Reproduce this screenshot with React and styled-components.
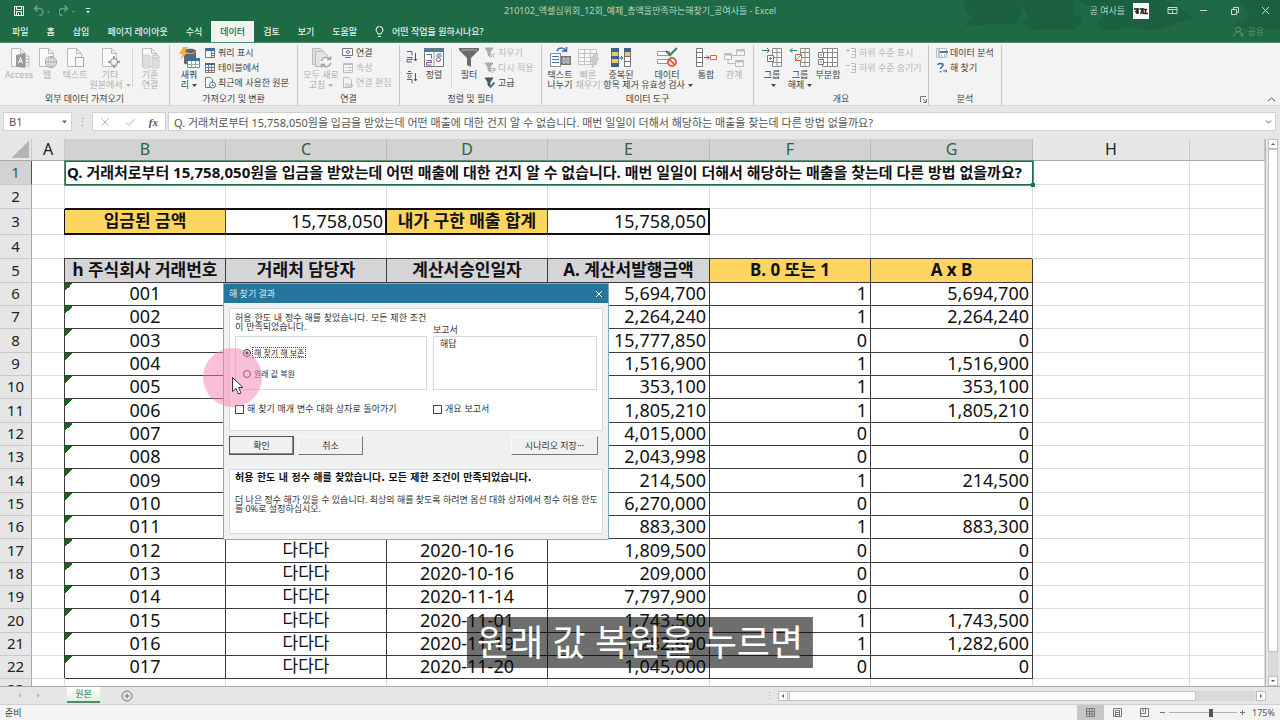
import React, {useState} from "react"
import styled, {createGlobalStyle, css} from "styled-components"


const GlobalStyle = createGlobalStyle`
    * {
        box-sizing: border-box;
    }

    body {
        margin: 0;
        font-family: "Noto Sans", "Noto Sans CJK KR", sans-serif;
        font-size: 9px;
        color: #333;
    }

    button, input, select {
        font: inherit;
        color: inherit;
        margin: 0;
        padding: 0;
        border: 0;
        border-radius: 0;
        background: none;
    }
`

const Window = styled.div`
    display: flex;
    flex-direction: column;
    height: 100vh;
    overflow: hidden;
    background: #e6e6e6;
`


/* ---------- icons ---------- */

const Svg = ({size = 22, children, ...rest}) => (
    <svg width={size} height={size} viewBox={`0 0 ${size} ${size}`} fill="none" stroke="#777" aria-hidden="true" {...rest}>
        {children}
    </svg>
)

const page = "M3.5 1.5h9l5 5v13h-14zM12.5 1.5v5h5"

const icons = {
    access: (
        <Svg stroke="#bbb">
            <path d={page} fill="#fafafa"/>
            <path d="M8 8l9-1.500v14.500l-9-1.500z" fill="#999" stroke="none"/>
            <path d="M10.500 16.500l2-6 2 6M11 14.500h3" stroke="#fff"/>
            <path d="M17 9h4v10h-4M17 12.500h4M17 15.500h4"/>
        </Svg>
    ),
    web: (
        <Svg stroke="#bbb">
            <path d={page} fill="#fafafa"/>
            <circle cx="15" cy="15" r="5.500" fill="#f3f3f3" stroke="#999"/>
            <path d="M9.500 15h11M15 9.500v11M15 9.500c-4 3-4 8 0 11M15 9.500c4 3 4 8 0 11" stroke="#aaa"/>
        </Svg>
    ),
    text: (
        <Svg stroke="#bbb">
            <path d={page} fill="#fafafa"/>
            <rect x="11.500" y="10.500" width="8" height="9" fill="#fafafa" stroke="#aaa"/>
        </Svg>
    ),
    other: (
        <Svg stroke="#bbb">
            <path d={page} fill="#fafafa"/>
            <circle cx="15" cy="15" r="3.500" fill="#f3f3f3" stroke="#888"/>
            <path d="M15 9v3M15 18v3M9 15h3M18 15h3" stroke="#888" strokeWidth="1.500"/>
        </Svg>
    ),
    existing: (
        <Svg stroke="#bbb">
            <path d={page} fill="#fafafa"/>
            <path d="M4 8h7v13h-7zM13 9h7v12h-7z" fill="#ddd" stroke="#d0d0d0"/>
            <ellipse cx="16.500" cy="9.500" rx="3.500" ry="1.500" fill="#eee"/>
        </Svg>
    ),
    newQuery: (
        <Svg>
            <path d="M6 4c0-3 12-3 12 0v12c0 2-12 2-12 0z" fill="#666" stroke="none"/>
            <path d="M6.500 5c2 2 9 2 11 0" stroke="#bbb"/>
            <path d="M5 0h5L7 5h3L2 13l2.500-6H1z" fill="#f0b04c" stroke="none"/>
            <path d="M9.500 11.500h12v9h-12z" fill="#fff" stroke="#7c8794"/>
            <path d="M9 11h13v3H9z" fill="#2f76b5" stroke="none"/>
            <path d="M9.500 17.500h12M13.500 14v7M17.500 14v7" stroke="#9aa"/>
        </Svg>
    ),
    refreshAll: (
        <Svg stroke="#bbb">
            <path d="M2.500 1.500h8l3 3v13h-11z" fill="#ddd"/>
            <path d="M5.500 4.500h8l4 4v11h-12z" fill="#e3e3e3"/>
            <circle cx="16" cy="15" r="6" fill="#f3f3f3" stroke="none"/>
            <path d="M11.500 14a4.500 4.500 0 0 1 8-2M20.500 9.500v3h-3.500M20.500 16a4.500 4.500 0 0 1-8 2M11.500 20.500v-3h3.500" stroke="#a5a5a5" strokeWidth="1.500"/>
        </Svg>
    ),
    sort: (
        <Svg>
            <path d="M1.500 2.500h19v17h-19z" fill="#fff"/>
            <path d="M1 1h20v4H1z" fill="#5b7894" stroke="none"/>
            <path d="M11 5v15" stroke="#999"/>
            <path d="M3.500 7.500h5v4M14 7h4M13 9h6" stroke="#3b6cb0"/>
            <circle cx="15.500" cy="12.500" r="2" stroke="#7d4aa5"/>
            <path d="M3.500 13.500h5v2h-5v2.500h5" stroke="#7d4aa5"/>
        </Svg>
    ),
    filter: (
        <Svg>
            <path d="M1 1h20v2l-8 8v9l-4-2v-7L1 3z" fill="#6b6b6b" stroke="none"/>
            <path d="M3 3h16" stroke="#aaa"/>
        </Svg>
    ),
    split: (
        <Svg>
            <path d="M1.500 6.500h10v13h-10z" fill="#fff" stroke="#8a9199"/>
            <path d="M3 9.500h7M3 12.500h7M3 15.500h7" stroke="#4379b5"/>
            <path d="M8 4c2-4 8-4 9 1M13 4h4.500V0" stroke="#2f6db5" strokeWidth="1.500"/>
            <path d="M12 9h10v9H12z" fill="#777" stroke="none"/>
            <path d="M14 11v5h2v-5zM18 11v5h2v-5z" stroke="#ddd"/>
        </Svg>
    ),
    flash: (
        <Svg stroke="#c4c4c4">
            <path d="M1.500 2.500h18v15h-18zM1.500 6.500h18M1.500 10.500h18M1.500 14.500h18M7.500 2.500v15M13.500 2.500v15" fill="#f7f7f7"/>
            <path d="M17 7h4l-2 4h3l-7 10 1-6h-3z" fill="#ccc"/>
        </Svg>
    ),
    duplicates: (
        <Svg>
            <path d="M1.500 1.500h7v18h-7zM14.500 1.500h6v18h-6z" fill="#fff"/>
            <path d="M1 1h8v4H1zM1 9h8v3H1zM1 16h8v4H1zM14 1h7v4h-7z" fill="#3f6285" stroke="none"/>
            <path d="M2 5h6v4H2zM2 12h6v4H2zM15 5h5v4h-5z" fill="#e9c577" stroke="none"/>
            <path d="M14.500 9.500h6M14.500 14.500h6"/>
            <path d="M9 11h4M11 9l2 2-2 2" stroke="#2f6db5"/>
        </Svg>
    ),
    validation: (
        <Svg>
            <path d="M1.500 4.500h12v4h-12zM1.500 12.500h11v4h-11z" fill="#fff" stroke="#999"/>
            <path d="M10 4l4 4 7-7" stroke="#388068" strokeWidth="2"/>
            <circle cx="16" cy="15" r="4" fill="#fff" stroke="#dc6144" strokeWidth="2"/>
            <path d="M13.500 12.500l5 5" stroke="#dc6144" strokeWidth="2"/>
        </Svg>
    ),
    consolidate: (
        <Svg>
            <path d="M1.500 1.500h6v18h-6zM1.500 5.500h6M1.500 10.500h6M1.500 15.500h6" fill="#fff"/>
            <path d="M9 10.500h5M12 8.500l2 2-2 2" stroke="#2f6db5"/>
            <path d="M15.500 8.500h6v4h-6z" stroke="#dc6144" fill="#fff"/>
        </Svg>
    ),
    relation: (
        <Svg stroke="#bbb">
            <path d="M1.500 6.500h7v6h-7zM13.500 2.500h8v6h-8zM12.500 13.500h8v6h-8zM8.500 8.500h5M5 12.500v4h7.500" fill="#f8f8f8"/>
            <path d="M2 7.500h6M14 3.500h7M13 14.500h7" strokeWidth="2"/>
        </Svg>
    ),
    group: (
        <Svg>
            <path d="M1 3.500h7M6 1l2.500 2.500L6 6" stroke="#388068"/>
            <path d="M11.500 1.500h9v18h-9zM16 1.500v18M11.500 5.500h9M11.500 10.500h9M11.500 15.500h9" fill="#fff" stroke="#8c8c8c"/>
            <path d="M6.500 8.500h6v6h-6zM8 11.500h3M9.500 10v3" fill="#fff"/>
        </Svg>
    ),
    ungroup: (
        <Svg>
            <path d="M1 3.500h7M3.500 1L1 3.500 3.500 6" stroke="#388068"/>
            <path d="M11.500 1.500h9v18h-9zM16 1.500v18M11.500 5.500h9M11.500 10.500h9M11.500 15.500h9" fill="#fff" stroke="#8c8c8c"/>
            <path d="M6.500 7.500h6v6h-6zM6.500 13.500l6-6" fill="#fff" stroke="#dc6144"/>
        </Svg>
    ),
    subtotal: (
        <Svg>
            <path d="M5.500 1.500h15v18h-15zM10.500 1.500v18M15.500 1.500v18M5.500 5.500h15M5.500 10.500h15M5.500 15.500h15" fill="#fff" stroke="#8c8c8c"/>
            <path d="M1.500 5.500h5v5h-5zM1.500 12.500h5v5h-5zM3 8h2M3 15h2" fill="#fff"/>
        </Svg>
    ),
    showQueries: (
        <Svg size={12}>
            <path d="M1.500 1.500h9v9h-9zM7.500 4v6" fill="#fff"/>
            <path d="M1 1h10v3H1z" fill="#3f6f9c" stroke="none"/>
            <path d="M8 6.500h2M8 8.500h2" stroke="#4379b5"/>
        </Svg>
    ),
    fromTable: (
        <Svg size={12}>
            <path d="M1.500 1.500h9v9h-9zM4.500 3v8M7.500 3v8M1 5.500h10M1 8.500h10" fill="#fff"/>
            <path d="M1 1h10v2H1z" fill="#3f6f9c" stroke="none"/>
        </Svg>
    ),
    recent: (
        <Svg size={12}>
            <path d="M1.500 .5h5l2 2v8h-7z" fill="#fff"/>
            <circle cx="8.500" cy="8" r="3" fill="#fff" stroke="#4379b5"/>
            <path d="M8.500 6.500v2h1.500" stroke="#4379b5"/>
        </Svg>
    ),
    connection: (
        <Svg size={12}>
            <path d="M.5 1.500h10v7h-10zM3 10.500h6" fill="#fff"/>
            <circle cx="6" cy="5" r="1.500" stroke="#4379b5"/>
            <path d="M3.500 5h1M7.500 5h1" stroke="#4379b5"/>
        </Svg>
    ),
    properties: (
        <Svg size={12} stroke="#bbb">
            <path d="M1.500 1.500h9v9h-9zM5.500 5.500h4M5.500 8.500h4M3 5.500h1M3 8.500h1"/>
            <path d="M1.500 2.500h9"/>
        </Svg>
    ),
    editLinks: (
        <Svg size={12} stroke="#bbb">
            <path d="M1.500 .5h5l3 3v7h-8z"/>
            <circle cx="5" cy="8.500" r="1.500"/>
            <circle cx="9" cy="8.500" r="1.500"/>
        </Svg>
    ),
    clear: (
        <Svg size={12} stroke="#aaa">
            <path d="M1 1h8L6 5v5L4 8V5z" fill="#aaa"/>
            <path d="M6.500 6.500l4 4M10.500 6.500l-4 4"/>
        </Svg>
    ),
    reapply: (
        <Svg size={12} stroke="#aaa">
            <path d="M1 1h8L6 5v5L4 8V5z" fill="#aaa"/>
            <path d="M10.500 8a2 2 0 1 0-1 2M11 6v2.500H8.500"/>
        </Svg>
    ),
    advanced: (
        <Svg size={12} stroke="#555">
            <path d="M1 1h8L6 5v5L4 8V5z" fill="#555"/>
            <path d="M6 10.500l4.500-5" stroke="#3b7abf" strokeWidth="2"/>
        </Svg>
    ),
    showDetail: (
        <Svg size={12} stroke="#bbb">
            <path d="M1 3.500h4M3 1.500v4M6 1.500h4.500v9H6M7 4.500h3M7 7.500h3"/>
        </Svg>
    ),
    hideDetail: (
        <Svg size={12} stroke="#bbb">
            <path d="M1 3.500h4M6 1.500h4.500v9H6M7 4.500h3M7 7.500h3"/>
        </Svg>
    ),
    analysis: (
        <Svg size={12} stroke="#bbb">
            <path d="M.5 1.500h2v9h-2zM3.500 1.500h7v9h-7zM5.500 7v3M8.500 7v3" fill="#fff"/>
            <path d="M4 5h8" stroke="#3b7abf" strokeWidth="2"/>
        </Svg>
    ),
    solver: (
        <Svg size={12} stroke="#33679f">
            <path d="M2 3c0-2 5-2 5 0 0 1.500-2.500 2-2.500 4M4.500 9v1.500" strokeWidth="1.500"/>
            <path d="M7 9h4M9.500 7.500L11 9l-1.500 1.500"/>
        </Svg>
    ),
    sortAsc: (
        <Svg size={14}>
            <path d="M2 1.500h5v4" stroke="#3b6cb0"/>
            <path d="M2 7.500h5v2H2v2.500h5" stroke="#7d4aa5"/>
            <path d="M10.500 3v8M9 9l1.500 2L12 9" stroke="#555"/>
        </Svg>
    ),
    sortDesc: (
        <Svg size={14}>
            <path d="M3 1.500h3M1.500 3.500h6" stroke="#7d4aa5"/>
            <circle cx="4.500" cy="6.500" r="1.500" stroke="#7d4aa5"/>
            <path d="M2 9.500h5v4" stroke="#3b6cb0"/>
            <path d="M10.500 3v8M9 9l1.500 2L12 9" stroke="#555"/>
        </Svg>
    )
}


/* ---------- title bar ---------- */

const Header = styled.header`
    position: relative;
    flex: none;
    background: #1d6a45;
    color: #e4f0e9;
    border-bottom: 1px solid #4d8c6c;
`

const Clouds = styled.svg`
    position: absolute;
    top: 0;
    right: 0;
    width: 330px;
    height: 42px;
`

const TitleBar = styled.div`
    position: relative;
    display: grid;
    grid-template-columns: 1fr auto 1fr;
    align-items: center;
    height: 21px;
`

const QuickAccess = styled.div`
    display: flex;
    align-items: center;
    gap: 8px;
    padding-left: 13px;
`

const IconButton = styled.button`
    display: flex;
    align-items: center;
    justify-content: center;
    opacity: ${props => (props.$faded ? 0.35 : 1)};
`

const FileTitle = styled.div`
    color: #b9d3c5;
    white-space: nowrap;
`

const Account = styled.div`
    display: flex;
    align-items: center;
    justify-content: flex-end;
    padding-right: 9px;
    color: #b9d3c5;
`

const Avatar = styled.div`
    width: 16px;
    height: 16px;
    margin: 0 18px 0 8px;
    background: #fff;

    svg {
        display: block;
    }
`

const WindowButtons = styled.div`
    display: flex;
    gap: 20px;
`

const TabBar = styled.nav`
    position: relative;
    display: flex;
    align-items: stretch;
    height: 21px;
    padding-left: 3px;
`

const Tab = styled.button`
    padding: 0 9px;
    font-weight: 500;
    white-space: nowrap;
    line-height: 20px;
    background: ${props => (props.$active ? "#f3f3f3" : "none")};
    color: ${props => (props.$active ? "#1d6a45" : "#e4f0e9")};
`

const TellMe = styled.button`
    display: flex;
    align-items: center;
    gap: 7px;
    padding-left: 8px;
    font-weight: 500;
    white-space: nowrap;
`

const Share = styled.button`
    display: flex;
    align-items: center;
    gap: 3px;
    margin-left: auto;
    padding-right: 16px;
    color: #5f9479;
`

const tabs = ["파일", "홈", "삽입", "페이지 레이아웃", "수식", "데이터", "검토", "보기", "도움말"]

const TopBar = ({tab, onTab}) => (
    <Header>
        <Clouds viewBox="0 0 330 42" aria-hidden="true">
            <g fill="#1b6040">
                <path d="M14 0h52l8 6-8 18H46l-32 2 8-10-6-4zM70 0h54v14l10 4-10 12H86l-16-6 8-8zM126 0h90l14 8 14 10-14 4-20 8-30-2-20 2-14-4 10-12zM290 0h40v30h-20l-30-4 20-10z"/>
            </g>
        </Clouds>
        <TitleBar>
            <QuickAccess>
                <IconButton aria-label="저장">
                    <Svg size={12} stroke="#fff">
                        <path d="M1.500 1.500h9v9h-9zM3.500 1.500v3h5v-3M3.500 10.500v-4h5v4M5.500 8v2"/>
                    </Svg>
                </IconButton>
                <IconButton aria-label="실행 취소" $faded>
                    <Svg size={18} stroke="#fff">
                        <path d="M1.500 6.500h5a3 3 0 0 1 0 7M4.500 3.500l-3 3 3 3" strokeWidth="1.500"/>
                        <path d="M14 9h3l-1.500 2z" fill="#fff" stroke="none"/>
                    </Svg>
                </IconButton>
                <IconButton aria-label="다시 실행" $faded>
                    <Svg size={18} stroke="#fff">
                        <path d="M8.500 6.500h-5a3 3 0 0 0 0 7M5.500 3.500l3 3-3 3" strokeWidth="1.500"/>
                        <path d="M13 9h3l-1.500 2z" fill="#fff" stroke="none"/>
                    </Svg>
                </IconButton>
                <IconButton aria-label="빠른 실행 도구 모음">
                    <Svg size={6} stroke="#fff">
                        <path d="M1 .5h4"/>
                        <path d="M1 3h4L3 5z" fill="#fff" stroke="none"/>
                    </Svg>
                </IconButton>
            </QuickAccess>
            <FileTitle>210102_엑셀심위회_12회_예제_총액을만족하는해찾기_공여사들 - Excel</FileTitle>
            <Account>
                공 여사들
                <Avatar>
                    <Svg size={16} stroke="#222">
                        <path d="M1 6h3v5M2 8.500h3M5 5v6M6.500 6h3l-2 5M10 5v6M11 6.500h3M12.500 6v4M10 10.500h5" strokeWidth="1.500"/>
                    </Svg>
                </Avatar>
                <WindowButtons>
                    <IconButton aria-label="리본 표시 옵션">
                        <Svg size={11} stroke="#c5dccf">
                            <path d="M1 2.500h9v6H1zM1 4.500h9M5.500 8V5.500"/>
                        </Svg>
                    </IconButton>
                    <IconButton aria-label="최소화">
                        <Svg size={11} stroke="#c5dccf"><path d="M2 5.500h7"/></Svg>
                    </IconButton>
                    <IconButton aria-label="이전 크기로">
                        <Svg size={11} stroke="#c5dccf"><path d="M2.500 4.500h5v5h-5zM4.500 4V2.500h5v5H8"/></Svg>
                    </IconButton>
                    <IconButton aria-label="닫기">
                        <Svg size={11} stroke="#c5dccf"><path d="M2 2l7 7M9 2l-7 7"/></Svg>
                    </IconButton>
                </WindowButtons>
            </Account>
        </TitleBar>
        <TabBar>
            {tabs.map(name => (
                <Tab key={name} $active={name === tab} onClick={() => onTab(name)}>{name}</Tab>
            ))}
            <TellMe>
                <Svg size={11} stroke="#fff">
                    <path d="M4 8C4 6.500 2 6 2 4a3.500 3.500 0 0 1 7 0c0 2-2 2.500-2 4zM4 10.500h3"/>
                </Svg>
                어떤 작업을 원하시나요?
            </TellMe>
            <Share>
                <Svg size={11} stroke="#5f9479">
                    <circle cx="5" cy="3.500" r="2.500"/>
                    <path d="M1 10.500c0-6 8-6 8-2M7 9h4M9 7v4"/>
                </Svg>
                공유
            </Share>
        </TabBar>
    </Header>
)


/* ---------- ribbon ---------- */

const RibbonBar = styled.div`
    position: relative;
    flex: none;
    display: flex;
    height: 63px;
    padding-top: 2px;
    background: #f3f3f3;
    border-bottom: 1px solid #d5d5d5;
`

const Group = styled.section`
    flex: none;
    display: flex;
    flex-direction: column;
    position: relative;
    width: ${props => props.$width}px;
    border-right: 1px solid #c8c8c8;
`

const GroupBody = styled.div`
    flex: 1;
    display: flex;
    align-items: flex-start;
    padding-left: ${props => props.$pad || 4}px;
`

const GroupTitle = styled.h2`
    margin: 0;
    font-size: 9px;
    font-weight: 400;
    line-height: 12px;
    text-align: center;
    color: #444;
`

const BigButton = styled.button`
    flex: none;
    display: flex;
    flex-direction: column;
    align-items: center;
    width: ${props => props.$width}px;
    padding-top: 2px;
    line-height: 10px;
    white-space: pre;
    color: ${props => (props.disabled ? "#b1b1b1" : "#444")};

    > svg {
        margin-bottom: 1px;
    }
`

const Caret = styled.svg`
    width: 5px;
    height: 3px;
    margin-left: 3px;
    vertical-align: middle;
    fill: currentColor;
`

const SmallList = styled.div`
    display: flex;
    flex-direction: column;
    padding-left: ${props => props.$pad || 0}px;
`

const SmallButton = styled.button`
    display: flex;
    align-items: center;
    gap: 2px;
    height: 15px;
    line-height: 15px;
    white-space: nowrap;
    color: ${props => (props.disabled ? "#b8b8b8" : "#444")};
`

const SortButtons = styled.div`
    display: flex;
    flex-direction: column;
    gap: 6px;
    padding-top: 5px;
`

const Divider = styled.div`
    width: 1px;
    height: 38px;
    margin: 4px 2px 0;
    background: #d5d5d5;
`

const Launcher = styled.button`
    position: absolute;
    right: 1px;
    bottom: 2px;
    display: flex;
`

const Collapse = styled.button`
    display: flex;
    align-items: flex-end;
    margin-left: auto;
    padding-right: 3px;
`

const Big = ({icon, label, width, caret, disabled}) => (
    <BigButton $width={width} disabled={disabled}>
        {icons[icon]}
        <span>
            {label}
            {caret && <Caret viewBox="0 0 5 3" aria-hidden="true"><path d="M0 0h5L2.500 3z"/></Caret>}
        </span>
    </BigButton>
)

const Small = ({icon, label, disabled}) => (
    <SmallButton disabled={disabled}>
        {icons[icon]}
        {label}
    </SmallButton>
)

const Ribbon = () => (
    <RibbonBar>
        <Group $width={170}>
            <GroupBody>
                <Big icon="access" label="Access" width={30} disabled/>
                <Big icon="web" label="웹" width={26} disabled/>
                <Big icon="text" label="텍스트" width={30} disabled/>
                <Big icon="other" label={"기타\n원본에서"} width={40} caret disabled/>
                <Divider/>
                <Big icon="existing" label={"기존\n연결"} width={30} disabled/>
            </GroupBody>
            <GroupTitle>외부 데이터 가져오기</GroupTitle>
        </Group>
        <Group $width={128}>
            <GroupBody>
                <Big icon="newQuery" label={"새쿼\n리"} width={30} caret/>
                <SmallList>
                    <Small icon="showQueries" label="쿼리 표시"/>
                    <Small icon="fromTable" label="테이블에서"/>
                    <Small icon="recent" label="최근에 사용한 원본"/>
                </SmallList>
            </GroupBody>
            <GroupTitle>가져오기 및 변환</GroupTitle>
        </Group>
        <Group $width={102}>
            <GroupBody $pad={2}>
                <Big icon="refreshAll" label={"모두 새로\n고침"} width={42} caret disabled/>
                <SmallList>
                    <Small icon="connection" label="연결"/>
                    <Small icon="properties" label="속성" disabled/>
                    <Small icon="editLinks" label="연결 편집" disabled/>
                </SmallList>
            </GroupBody>
            <GroupTitle>연결</GroupTitle>
        </Group>
        <Group $width={142}>
            <GroupBody $pad={5}>
                <SortButtons>
                    <IconButton aria-label="오름차순 정렬">{icons.sortAsc}</IconButton>
                    <IconButton aria-label="내림차순 정렬">{icons.sortDesc}</IconButton>
                </SortButtons>
                <Big icon="sort" label="정렬" width={30}/>
                <Divider/>
                <Big icon="filter" label="필터" width={30}/>
                <SmallList>
                    <Small icon="clear" label="지우기" disabled/>
                    <Small icon="reapply" label="다시 적용" disabled/>
                    <Small icon="advanced" label="고급"/>
                </SmallList>
            </GroupBody>
            <GroupTitle>정렬 및 필터</GroupTitle>
        </Group>
        <Group $width={212}>
            <GroupBody $pad={3}>
                <Big icon="split" label={"텍스트\n나누기"} width={30}/>
                <Big icon="flash" label={"빠른\n채우기"} width={26} disabled/>
                <Big icon="duplicates" label={"중복된\n항목 제거"} width={40}/>
                <Big icon="validation" label={"데이터\n유효성 검사"} width={52} caret/>
                <Big icon="consolidate" label="통합" width={26}/>
                <Big icon="relation" label="관계" width={30} disabled/>
            </GroupBody>
            <GroupTitle>데이터 도구</GroupTitle>
        </Group>
        <Group $width={175}>
            <GroupBody>
                <Big icon="group" label={"그룹\n"} width={28} caret/>
                <Big icon="ungroup" label={"그룹\n해제"} width={28} caret/>
                <Big icon="subtotal" label="부분합" width={28}/>
                <SmallList $pad={3}>
                    <Small icon="showDetail" label="하위 수준 표시" disabled/>
                    <Small icon="hideDetail" label="하위 수준 숨기기" disabled/>
                </SmallList>
            </GroupBody>
            <GroupTitle>개요</GroupTitle>
            <Launcher aria-label="개요 설정">
                <Svg size={7}><path d="M.5 6V.5H6M3 3l3 3M6.500 3v3.500H3"/></Svg>
            </Launcher>
        </Group>
        <Group $width={73}>
            <GroupBody $pad={7}>
                <SmallList>
                    <Small icon="analysis" label="데이터 분석"/>
                    <Small icon="solver" label="해 찾기"/>
                </SmallList>
            </GroupBody>
            <GroupTitle>분석</GroupTitle>
        </Group>
        <Collapse aria-label="리본 메뉴 축소">
            <Svg size={11}><path d="M2 7l3.500-3L9 7" stroke="#555"/></Svg>
        </Collapse>
    </RibbonBar>
)


/* ---------- formula bar ---------- */

const FormulaBar = styled.div`
    flex: none;
    display: flex;
    align-items: center;
    height: 33px;
    padding: 0 4px 2px 3px;
    font-size: 11px;
    color: #555;
`

const Field = styled.div`
    display: flex;
    align-items: center;
    height: 19px;
    width: ${props => props.$width || "auto"};
    flex: ${props => (props.$grow ? 1 : "none")};
    padding: 0 3px 0 5px;
    background: #fff;
    border: 1px solid #d0d0d0;

    input {
        flex: 1;
        min-width: 0;
        height: 17px;
        outline: none;
    }
`

const FormulaButtons = styled(Field)`
    justify-content: space-between;
    margin-right: 2px;
    padding: 0 7px 0 6px;
    font: italic 700 11px "Liberation Serif", serif;
`

const Grip = styled.span`
    width: 20px;
    text-align: center;
    color: #999;
`

const question = "Q. 거래처로부터 15,758,050원을 입금을 받았는데 어떤 매출에 대한 건지 알 수 없습니다. 매번 일일이 더해서 해당하는 매출을 찾는데 다른 방법 없을까요?"

const Formula = () => (
    <FormulaBar>
        <Field $width="69px">
            <input aria-label="이름 상자" defaultValue="B1" size="4"/>
            <Svg size={7}><path d="M1 2.500h5l-2.500 3z" fill="#666" stroke="none"/></Svg>
        </Field>
        <Grip>⋮</Grip>
        <FormulaButtons $width="74px">
            <IconButton aria-label="취소">
                <Svg size={12} stroke="#b5b5b5"><path d="M2.500 2.500l7 7M9.500 2.500l-7 7"/></Svg>
            </IconButton>
            <IconButton aria-label="입력">
                <Svg size={12} stroke="#b5b5b5"><path d="M2 6.500l3 3 6-7"/></Svg>
            </IconButton>
            <IconButton aria-label="함수 삽입">fx</IconButton>
        </FormulaButtons>
        <Field $grow>
            <input aria-label="수식 입력줄" defaultValue={question}/>
            <Svg size={7}><path d="M1 2.500l2.500 2.500L6 2.500" stroke="#555"/></Svg>
        </Field>
    </FormulaBar>
)


/* ---------- sheet ---------- */

const SheetArea = styled.main`
    position: relative;
    flex: 1;
    min-height: 0;
    display: flex;
    overflow: hidden;
`

const GridPane = styled.div`
    flex: 1;
    min-width: 0;
    overflow: hidden;
    background: #fff;
    border-right: 1px solid #b5b5b5;
`

const Grid = styled.table`
    width: 100%;
    table-layout: fixed;
    border-collapse: separate;
    border-spacing: 0;
    font-size: 18px;
    line-height: 20px;
    color: #111;
    white-space: nowrap;
`

const Col = styled.col`
    width: ${props => (props.$width ? `${props.$width}px` : "auto")};
`

const ColHead = styled.th`
    height: 22px;
    padding: 0 0 1px;
    font-size: 16px;
    font-weight: 400;
    color: ${props => (props.$selected ? "#2b6249" : "#222")};
    background: ${props => (props.$selected ? "#d2d2d2" : "#e6e6e6")};
    border-right: 1px solid ${props => (props.$selected ? "#bcbcbc" : "#c8c8c8")};
    border-bottom: 1px solid #a8a8a8;
`

const Corner = styled(ColHead)`
    background: linear-gradient(135deg, transparent 50%, #b4b4b4 50%) 12px 2px / 17px 17px no-repeat #e6e6e6;
`

const Row = styled.tr`
    height: ${props => props.$height}px;
`

const RowHead = styled.th`
    padding: 0 0 2px;
    font-size: 15px;
    font-weight: 400;
    color: ${props => (props.$selected ? "#2b6249" : "#222")};
    background: ${props => (props.$selected ? "#d2d2d2" : "#e6e6e6")};
    border-right: 1px solid ${props => (props.$selected ? "#1f7145" : "#a8a8a8")};
    border-bottom: 1px solid #c8c8c8;
`

const fills = {
    yellow: "#ffd562",
    gray: "#d5d4d6"
}

const Cell = styled.td`
    padding: 0 3px 2px;
    border-right: 1px solid #dcdcdc;
    border-bottom: 1px solid #dcdcdc;
    text-align: ${props => props.$align || "center"};
    background-color: ${props => fills[props.$fill] || "transparent"};

    ${props => props.$boxed && css`
        border-color: #3c3a3e;
        box-shadow: -1px -1px 0 0 #3c3a3e;
    `}

    ${props => props.$bold && css`
        font-size: 17px;
        font-weight: 700;
    `}

    ${props => props.$korean && css`
        font-size: 17px;
    `}

    ${props => props.$textNumber && css`
        background-image: linear-gradient(135deg, #0d6a18 50%, transparent 50%);
        background-size: 8px 8px;
        background-repeat: no-repeat;
    `}
`

const ThickCell = styled(Cell)`
    border-color: #111;
    border-right-color: ${props => (props.$last ? "#111" : "#444")};
    box-shadow:
        0 -1px 0 #111,
        inset 0 1px 0 #111,
        inset 0 -1px 0 #111
        ${props => (props.$last ? ", inset -1px 0 0 #111" : ", -1px 0 0 #111")};
`

const SelectedCell = styled.td`
    position: relative;
    padding: 0 1px 2px;
    border: 1px solid #1f7145;
    outline: 1px solid #5c8f77;
    font-size: 15px;
    font-weight: 700;

    &::after {
        content: "";
        position: absolute;
        right: -3px;
        bottom: -3px;
        width: 4px;
        height: 4px;
        background: #1f7145;
    }
`

const columns = [
    {name: "A", width: 33},
    {name: "B", width: 161, selected: true},
    {name: "C", width: 161, selected: true},
    {name: "D", width: 161, selected: true},
    {name: "E", width: 162, selected: true},
    {name: "F", width: 161, selected: true},
    {name: "G", width: 162, selected: true},
    {name: "H", width: 157},
    {name: ""}
]

const heads = [
    {text: "h 주식회사 거래번호", fill: "gray"},
    {text: "거래처 담당자", fill: "gray"},
    {text: "계산서승인일자", fill: "gray"},
    {text: "A. 계산서발행금액", fill: "gray"},
    {text: "B. 0 또는 1", fill: "yellow"},
    {text: "A x B", fill: "yellow"}
]

const sales = [
    {id: "001", amount: 5694700, pick: 1},
    {id: "002", amount: 2264240, pick: 1},
    {id: "003", amount: 15777850, pick: 0},
    {id: "004", amount: 1516900, pick: 1},
    {id: "005", amount: 353100, pick: 1},
    {id: "006", amount: 1805210, pick: 1},
    {id: "007", amount: 4015000, pick: 0},
    {id: "008", amount: 2043998, pick: 0},
    {id: "009", amount: 214500, pick: 1},
    {id: "010", amount: 6270000, pick: 0},
    {id: "011", amount: 883300, pick: 1},
    {id: "012", owner: "다다다", date: "2020-10-16", amount: 1809500, pick: 0},
    {id: "013", owner: "다다다", date: "2020-10-16", amount: 209000, pick: 0},
    {id: "014", owner: "다다다", date: "2020-11-14", amount: 7797900, pick: 0},
    {id: "015", owner: "다다다", date: "2020-11-01", amount: 1743500, pick: 1},
    {id: "016", owner: "다다다", date: "2020-11-19", amount: 1282600, pick: 1},
    {id: "017", owner: "다다다", date: "2020-11-20", amount: 1045000, pick: 0}
]

const money = value => value.toLocaleString("en-US")

const blanks = count => Array.from({length: count}, (_, i) => <Cell key={i}/>)

const Sheet = () => (
    <Grid>
        <colgroup>
            <Col $width={32}/>
            {columns.map(col => <Col key={col.name} $width={col.width}/>)}
        </colgroup>
        <thead>
            <tr>
                <Corner/>
                {columns.map(col => (
                    <ColHead key={col.name} $selected={col.selected}>{col.name}</ColHead>
                ))}
            </tr>
        </thead>
        <tbody>
            <Row $height={24}>
                <RowHead $selected>1</RowHead>
                <Cell/>
                <SelectedCell colSpan={6}>{question}</SelectedCell>
                {blanks(2)}
            </Row>
            <Row $height={24}>
                <RowHead>2</RowHead>
                {blanks(9)}
            </Row>
            <Row $height={26}>
                <RowHead>3</RowHead>
                <Cell/>
                <ThickCell $fill="yellow" $bold>입금된 금액</ThickCell>
                <ThickCell $align="right" $last>{money(15758050)}</ThickCell>
                <ThickCell $fill="yellow" $bold>내가 구한 매출 합계</ThickCell>
                <ThickCell $align="right" $last>{money(15758050)}</ThickCell>
                {blanks(4)}
            </Row>
            <Row $height={24}>
                <RowHead>4</RowHead>
                {blanks(9)}
            </Row>
            <Row $height={24}>
                <RowHead>5</RowHead>
                <Cell/>
                {heads.map(head => (
                    <Cell key={head.text} $fill={head.fill} $boxed $bold>{head.text}</Cell>
                ))}
                {blanks(2)}
            </Row>
            {sales.map((sale, i) => (
                <Row key={sale.id} $height={i % 3 === 2 ? 24 : 23}>
                    <RowHead>{i + 6}</RowHead>
                    <Cell/>
                    <Cell $boxed $textNumber>{sale.id}</Cell>
                    <Cell $boxed $korean>{sale.owner}</Cell>
                    <Cell $boxed>{sale.date}</Cell>
                    <Cell $boxed $align="right">{money(sale.amount)}</Cell>
                    <Cell $boxed $align="right">{sale.pick}</Cell>
                    <Cell $boxed $align="right">{money(sale.amount * sale.pick)}</Cell>
                    {blanks(2)}
                </Row>
            ))}
            <Row $height={23}>
                <RowHead>23</RowHead>
                {blanks(9)}
            </Row>
        </tbody>
    </Grid>
)

const ArrowButton = styled.button`
    flex: none;
    display: flex;
    align-items: center;
    justify-content: center;
    width: 10px;
    height: 10px;
    background: #fff;
    border: 1px solid #c0c0c0;
`

const VScroll = styled.div`
    flex: none;
    display: flex;
    flex-direction: column;
    width: 14px;
    padding: 0 2px;
`

const VTrack = styled.div`
    flex: 1;
    padding-bottom: 24px;
    background: #dadada;
`

const Thumb = styled.div`
    height: 100%;
    background: #fff;
    border: 1px solid #c0c0c0;
`


/* ---------- solver dialog ---------- */

const DialogBox = styled.div`
    position: absolute;
    left: 223px;
    top: 144px;
    width: 386px;
    padding-bottom: 5px;
    background: #f0f0f0;
    border: 1px solid #7fb0c8;
    color: #333;
    line-height: 9px;
`

const DialogTitle = styled.div`
    display: flex;
    align-items: center;
    justify-content: space-between;
    height: 19px;
    padding: 0 4px 0 5px;
    background: #24769f;
    color: #d9e9f1;
`

const Panel = styled.div`
    margin: 5px 5px 0;
    padding: 5px;
    background: #fff;
    border: 1px solid #d5dae2;
`

const BottomPanel = styled(Panel)`
    height: 65px;
    margin-top: 14px;
    padding-top: 3px;
`

const Columns = styled.div`
    display: grid;
    grid-template-columns: 192px 1fr;
    column-gap: 6px;
    height: 111px;
`

const Half = styled.div`
    display: flex;
    flex-direction: column;
    padding-top: ${props => props.$top || 0}px;
`

const Message = styled.p`
    margin: 0;
    font-family: "DejaVu Sans", "Noto Sans CJK KR", sans-serif;
    font-weight: ${props => (props.$bold ? 700 : 400)};
    font-size: ${props => (props.$bold ? 10 : 9)}px;
    color: ${props => (props.$bold ? "#111" : "#333")};
    white-space: ${props => (props.$bold ? "nowrap" : "pre")};
`

const Detail = styled.p`
    margin: 13px 0 0;
    white-space: nowrap;
`

const Choices = styled.fieldset`
    height: 54px;
    margin: 4px 0 0;
    padding: 10px 7px;
    border: 1px solid #d5dae2;
    font-size: 8px;
`

const Choice = styled.label`
    display: flex;
    align-items: center;
    gap: 2px;
    height: 11px;
    margin-bottom: ${props => props.$gap || 0}px;
    white-space: nowrap;

    span {
        padding: 0 1px;
        outline: ${props => (props.$focused ? "1px dotted #444" : "none")};
    }
`

const Radio = styled.input`
    appearance: none;
    width: 8px;
    height: 8px;
    border: 1px solid #333;
    border-radius: 50%;

    &:checked {
        background: radial-gradient(#222 1px, #fff 2px);
    }
`

const Check = styled.input`
    appearance: none;
    width: 9px;
    height: 9px;
    border: 1px solid #444;

    &:checked {
        background: #444;
    }
`

const ReportList = styled.select`
    height: 54px;
    margin-top: 2px;
    padding: 0 6px;
    border: 1px solid #d5dae2;
    overflow: hidden;
    outline: none;

    option {
        min-height: 9px;
        padding: 0;
        line-height: 9px;
    }
`

const CheckRow = styled.div`
    display: flex;
    margin-top: 14px;
    font-family: "DejaVu Sans", "Noto Sans CJK KR", sans-serif;
`

const Buttons = styled.div`
    display: flex;
    gap: 4px;
    padding: 5px 10px 0 5px;

    button:last-child {
        margin-left: auto;
    }
`

const DialogButton = styled.button`
    width: ${props => props.$width}px;
    height: 19px;
    border: 1px solid;
    border-color: ${props => (props.$primary ? "#555" : "#fafafa #777 #777 #fafafa")};
    box-shadow: ${props => (props.$primary ? "inset -1px -1px 0 #888" : "none")};
`

const SolverDialog = () => {
    const [result, setResult] = useState("keep")

    return (
        <DialogBox role="dialog" aria-label="해 찾기 결과">
            <DialogTitle>
                해 찾기 결과
                <IconButton aria-label="대화 상자 닫기">
                    <Svg size={10} stroke="#fff"><path d="M2 2l6 6M8 2l-6 6"/></Svg>
                </IconButton>
            </DialogTitle>
            <Panel>
                <Columns>
                    <Half>
                        <Message>{"허용 한도 내 정수 해를 찾았습니다. 모든 제한 조건\n이 만족되었습니다."}</Message>
                        <Choices>
                            <Choice $gap={10} $focused={result === "keep"}>
                                <Radio type="radio" name="result" checked={result === "keep"} onChange={() => setResult("keep")}/>
                                <span>해 찾기 해 보존</span>
                            </Choice>
                            <Choice $focused={result === "restore"}>
                                <Radio type="radio" name="result" checked={result === "restore"} onChange={() => setResult("restore")}/>
                                <span>원래 값 복원</span>
                            </Choice>
                        </Choices>
                        <CheckRow>
                            <Choice>
                                <Check type="checkbox"/>
                                <span>해 찾기 매개 변수 대화 상자로 돌아가기</span>
                            </Choice>
                        </CheckRow>
                    </Half>
                    <Half $top={11}>
                        <label htmlFor="report">보고서</label>
                        <ReportList id="report" size="4">
                            <option>해답</option>
                        </ReportList>
                        <CheckRow>
                            <Choice>
                                <Check type="checkbox"/>
                                <span>개요 보고서</span>
                            </Choice>
                        </CheckRow>
                    </Half>
                </Columns>
            </Panel>
            <Buttons>
                <DialogButton $width={65} $primary>확인</DialogButton>
                <DialogButton $width={65}>취소</DialogButton>
                <DialogButton $width={87}>시나리오 저장···</DialogButton>
            </Buttons>
            <BottomPanel>
                <Message $bold>허용 한도 내 정수 해를 찾았습니다. 모든 제한 조건이 만족되었습니다.</Message>
                <Detail>
                    더 나은 정수 해가 있을 수 있습니다. 최상의 해를 찾도록 하려면 옵션 대화 상자에서 정수 허용 한도<br/>
                    를 0%로 설정하십시오.
                </Detail>
            </BottomPanel>
        </DialogBox>
    )
}


/* ---------- pointer and caption ---------- */

const Pointer = styled.div`
    position: absolute;
    left: 203px;
    top: 209px;
    width: 59px;
    height: 59px;
    border-radius: 50%;
    background: rgba(244, 130, 175, 0.5);

    svg {
        position: absolute;
        left: 28px;
        top: 28px;
    }
`

const Caption = styled.div`
    position: absolute;
    left: 50%;
    bottom: 18px;
    transform: translateX(-50%);
    padding: 0 10px;
    background: rgba(0, 0, 0, 0.57);
    color: #fff;
    font-size: 36px;
    line-height: 51px;
    white-space: nowrap;
`


/* ---------- sheet tabs and status bar ---------- */

const SheetTabs = styled.div`
    flex: none;
    display: flex;
    align-items: center;
    height: 19px;
    padding-right: 14px;
    border-top: 1px solid #ababab;
    border-bottom: 1px solid #d0d0d0;
`

const Nav = styled.div`
    display: flex;
    gap: 12px;
    width: 67px;
    padding-left: 16px;
`

const SheetTab = styled.button`
    align-self: flex-start;
    width: 33px;
    height: 16px;
    line-height: 14px;
    background: linear-gradient(#fff, #e3f0dc);
    border-bottom: 2px solid #4c8a6a;
    color: #2f7a50;
`

const AddSheet = styled.button`
    display: flex;
    margin-left: 21px;
`

const HScroll = styled.div`
    display: flex;
    align-items: center;
    gap: 1px;
    width: 499px;
    margin-left: auto;
`

const HTrack = styled.div`
    flex: 1;
    height: 10px;
    padding-right: 59px;
    background: #dadada;
`

const StatusBar = styled.footer`
    flex: none;
    display: flex;
    align-items: center;
    justify-content: space-between;
    height: 15px;
    padding: 0 5px;
    background: #f3f3f3;
`

const ViewTools = styled.div`
    display: flex;
    align-items: center;
`

const ViewButton = styled.button`
    display: flex;
    align-items: center;
    justify-content: center;
    width: 27px;
    height: 15px;
    background: ${props => (props.$active ? "#c6c6c6" : "none")};
`

const ZoomSlider = styled.input`
    appearance: none;
    width: 68px;
    height: 11px;
    margin: 0 2px;
    background: linear-gradient(#b0b0b0, #b0b0b0) center / 100% 1px no-repeat;

    &::-webkit-slider-thumb {
        appearance: none;
        width: 4px;
        height: 8px;
        background: #555;
    }
`

const ZoomValue = styled.output`
    margin-left: 6px;
    color: #555;
`

const BottomTabs = () => (
    <SheetTabs>
        <Nav>
            <IconButton aria-label="이전 시트"><Svg size={7}><path d="M5 1v5L2 3.500z" fill="#bbb" stroke="none"/></Svg></IconButton>
            <IconButton aria-label="다음 시트"><Svg size={7}><path d="M2 1v5l3-2.500z" fill="#bbb" stroke="none"/></Svg></IconButton>
        </Nav>
        <SheetTab>원본</SheetTab>
        <AddSheet aria-label="새 시트">
            <Svg size={12}><circle cx="6" cy="6" r="5"/><path d="M3.500 6h5M6 3.500v5"/></Svg>
        </AddSheet>
        <HScroll>
            <Svg size={10} stroke="none" fill="#aaa"><path d="M2 1h1v1H2zM2 4h1v1H2zM2 7h1v1H2z"/></Svg>
            <ArrowButton aria-label="왼쪽으로"><Svg size={6}><path d="M4 1v4L2 3z" fill="#555" stroke="none"/></Svg></ArrowButton>
            <HTrack><Thumb/></HTrack>
            <ArrowButton aria-label="오른쪽으로"><Svg size={6}><path d="M2 1v4l2-2z" fill="#555" stroke="none"/></Svg></ArrowButton>
        </HScroll>
    </SheetTabs>
)

const Status = () => {
    const [zoom, setZoom] = useState(62)

    return (
        <StatusBar>
            준비
            <ViewTools>
                <ViewButton $active aria-label="기본">
                    <Svg size={11}><path d="M1.500 1.500h8v8h-8zM1.500 4.500h8M1.500 7h8M4.500 1.500v8M7 1.500v8"/></Svg>
                </ViewButton>
                <ViewButton aria-label="페이지 레이아웃 보기">
                    <Svg size={11}><path d="M1.500 1.500h8v8h-8zM3.500 3.500h4v6h-4zM4 5.500h3M4 7.500h3"/></Svg>
                </ViewButton>
                <ViewButton aria-label="페이지 나누기 미리 보기">
                    <Svg size={11}><path d="M1.500 1.500h8v8h-8zM1.500 6.500h5v-5M4 2v3"/></Svg>
                </ViewButton>
                <IconButton aria-label="축소"><Svg size={9}><path d="M2 4.500h5"/></Svg></IconButton>
                <ZoomSlider
                    type="range"
                    aria-label="확대/축소"
                    value={zoom}
                    onChange={e => setZoom(e.target.value)}
                />
                <IconButton aria-label="확대"><Svg size={7}><path d="M1 3.500h5M3.500 1v5"/></Svg></IconButton>
                <ZoomValue>175%</ZoomValue>
            </ViewTools>
        </StatusBar>
    )
}


const App = () => {
    const [tab, setTab] = useState("데이터")

    return (
        <Window>
            <GlobalStyle/>
            <TopBar tab={tab} onTab={setTab}/>
            <Ribbon/>
            <Formula/>
            <SheetArea>
                <GridPane>
                    <Sheet/>
                </GridPane>
                <VScroll>
                    <ArrowButton aria-label="위로"><Svg size={6}><path d="M1 4h4L3 2z" fill="#555" stroke="none"/></Svg></ArrowButton>
                    <VTrack><Thumb/></VTrack>
                    <ArrowButton aria-label="아래로"><Svg size={6}><path d="M1 2h4L3 4z" fill="#555" stroke="none"/></Svg></ArrowButton>
                </VScroll>
                <SolverDialog/>
                <Pointer>
                    <svg width="14" height="20" viewBox="0 0 14 20" aria-hidden="true">
                        <path d="M1.500 1.500v14l3.500-3 2.500 5.500 2.500-1-2.500-5.500h4.500z" fill="#fff" stroke="#333"/>
                    </svg>
                </Pointer>
                <Caption>원래 값 복원을 누르면</Caption>
            </SheetArea>
            <BottomTabs/>
            <Status/>
        </Window>
    )
}


export default App
